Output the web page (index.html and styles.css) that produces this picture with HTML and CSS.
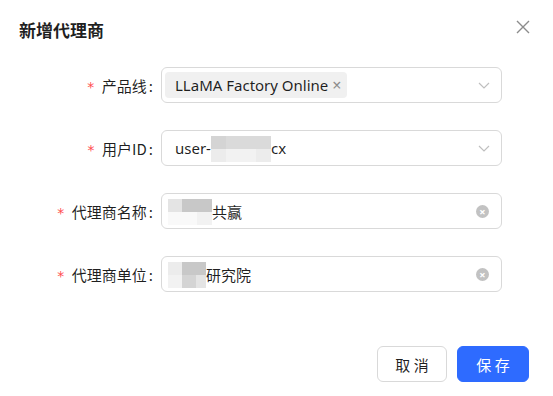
FILE: index.html
```html
<!DOCTYPE html>
<html lang="zh-CN">
<head>
    <meta charset="UTF-8">
    <meta name="viewport" content="width=device-width, initial-scale=1.0">
    <title>新增代理商</title>
    <link rel="stylesheet" href="styles.css">
</head>
<body>
    <div class="modal">
        <div class="modal-header">
            <h1>新增代理商</h1>
            <button class="close" aria-label="关闭">
                <svg width="14" height="14" viewBox="0 0 14 14"><path d="M1 1L13 13M13 1L1 13" stroke="#8c8c8c" stroke-width="1.4" fill="none"/></svg>
            </button>
        </div>

        <div class="form">
            <div class="form-row">
                <label class="required">产品线</label>
                <div class="field">
                    <span class="tag">LLaMA Factory Online <span class="tag-x">×</span></span>
                    <svg class="arrow" width="12" height="7" viewBox="0 0 12 7"><path d="M1 1L6 6L11 1" stroke="#bfbfbf" stroke-width="1.2" fill="none"/></svg>
                </div>
            </div>

            <div class="form-row">
                <label class="required">用户ID</label>
                <div class="field text">
                    <span class="value">user-<span class="mosaic m-user">
                        <i class="g3"></i><i class="g2"></i><i class="g2"></i><i class="g2"></i>
                        <i class="g5"></i><i class="g6"></i><i class="g6"></i><i class="g5"></i>
                    </span>cx</span>
                    <svg class="arrow" width="12" height="7" viewBox="0 0 12 7"><path d="M1 1L6 6L11 1" stroke="#bfbfbf" stroke-width="1.2" fill="none"/></svg>
                </div>
            </div>

            <div class="form-row">
                <label class="required">代理商名称</label>
                <div class="field text">
                    <span class="value"><span class="mosaic m-name">
                        <i class="g4"></i><i class="g1"></i><i class="g1"></i>
                        <i class="g7"></i><i class="g7"></i><i class="g6"></i>
                    </span>共赢</span>
                    <span class="clear">×</span>
                </div>
            </div>

            <div class="form-row">
                <label class="required">代理商单位</label>
                <div class="field text">
                    <span class="value"><span class="mosaic m-unit">
                        <i class="g5"></i><i class="g1"></i><i class="g1"></i>
                        <i class="g6"></i><i class="g3"></i><i class="g4"></i>
                    </span>研究院</span>
                    <span class="clear">×</span>
                </div>
            </div>
        </div>

        <div class="modal-footer">
            <button class="btn">取 消</button>
            <button class="btn primary">保 存</button>
        </div>
    </div>
</body>
</html>
```

FILE: styles.css
```css
* {
    margin: 0;
    padding: 0;
    box-sizing: border-box;
}

body {
    background: #fff;
    color: rgba(0, 0, 0, 0.88);
    font-family: "Noto Sans", "Noto Sans CJK SC", sans-serif;
    font-size: 15px;
}

.modal {
    width: 553px;
    height: 396px;
    padding: 20px 24px;
}

.modal-header {
    display: flex;
    justify-content: space-between;
    align-items: center;
    height: 20px;
}

h1 {
    font-family: "Noto Sans CJK SC", sans-serif;
    font-size: 17px;
    font-weight: 700;
    line-height: 20px;
    margin-left: -5px;
}

.close {
    border: none;
    background: none;
    display: flex;
    margin-top: -7px;
    margin-right: -1px;
    cursor: pointer;
}

.form {
    margin-top: 27px;
    display: flex;
    flex-direction: column;
    gap: 27px;
}

.form-row {
    display: grid;
    grid-template-columns: 137px 341px;
    align-items: center;
}

label {
    font-family: "Noto Sans CJK SC", sans-serif;
    text-align: right;
    white-space: nowrap;
}

label.required::before {
    content: "*";
    color: #ff4d4f;
    margin-right: 7px;
    font-family: "DejaVu Sans Mono", monospace;
    font-size: 14px;
}

label::after {
    content: ":";
    margin: 0 8px 0 2px;
}

.field {
    height: 36px;
    border: 1px solid #d9d9d9;
    border-radius: 6px;
    display: flex;
    align-items: center;
    padding: 0 11px 0 3px;
}

.field.text {
    padding-left: 13px;
}

.value {
    flex: 1;
    display: flex;
    align-items: center;
    font-family: "Noto Sans", "Noto Sans CJK SC", sans-serif;
}

.tag {
    flex: none;
    height: 26px;
    background: #f0f0f0;
    border-radius: 4px;
    padding: 0 6px 0 10px;
    display: flex;
    align-items: center;
    gap: 4px;
}

.tag-x {
    color: #8c8c8c;
    font-size: 16px;
}

.arrow {
    margin-left: auto;
}

.mosaic {
    display: inline-grid;
    grid-auto-rows: 13px;
    margin-top: 2px;
}

.mosaic i {
    display: block;
}

.m-user {
    grid-template-columns: repeat(4, 15px);
}

.m-name {
    grid-template-columns: 14px 15px 15px;
    margin-left: -7px;
}

.m-unit {
    grid-template-columns: 14px 14px 10px;
    margin-left: -7px;
}

.g1 { background: #c8c8c8; }
.g2 { background: #dadada; }
.g3 { background: #d4d4d4; }
.g4 { background: #e4e4e4; }
.g5 { background: #ececec; }
.g6 { background: #f2f2f2; }
.g7 { background: #f9f9f9; }

.clear {
    width: 13px;
    height: 13px;
    border-radius: 50%;
    background: #c2c2c2;
    color: #fff;
    font-size: 11px;
    line-height: 13px;
    text-align: center;
    font-weight: 700;
    margin-right: 1px;
}

.modal-footer {
    margin-top: 54px;
    display: flex;
    justify-content: flex-end;
    gap: 10px;
}

.btn {
    height: 36px;
    width: 70px;
    border: 1px solid #d9d9d9;
    border-radius: 6px;
    background: #fff;
    font-family: "Noto Sans CJK SC", sans-serif;
    font-size: 15px;
    color: rgba(0, 0, 0, 0.88);
    cursor: pointer;
}

.btn.primary {
    width: 72px;
    background: #2e6bff;
    border-color: #2e6bff;
    color: #fff;
}
```
